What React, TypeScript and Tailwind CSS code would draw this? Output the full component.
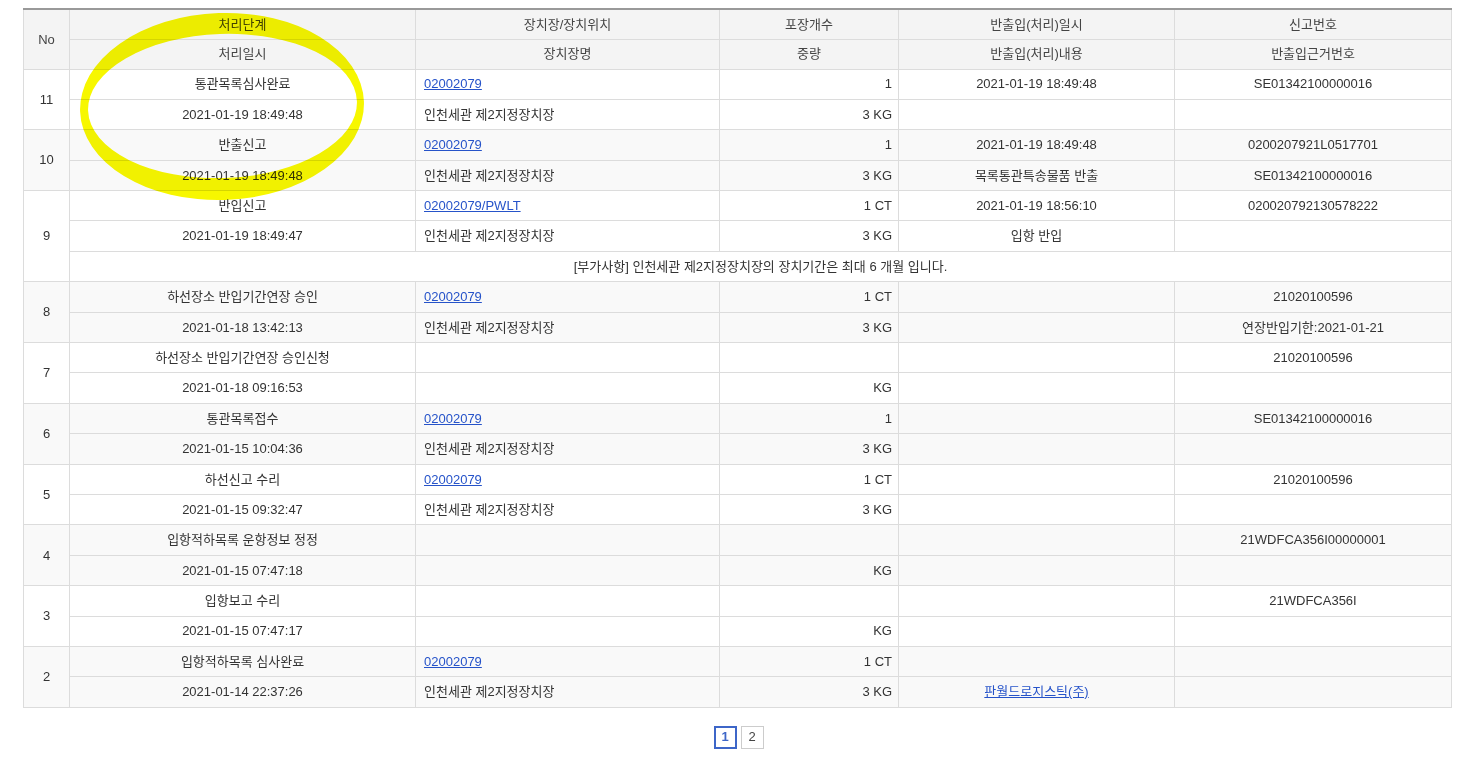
import React from 'react'

type Row = {
  no: number
  step: string
  date: string
  loc?: string
  locName?: string
  pkg?: string
  weight?: string
  ioDate?: string
  ioDesc?: string
  ioLink?: boolean
  reportNo?: string
  basisNo?: string
  note?: string
}

const rows: Row[] = [
  { no: 11, step: '통관목록심사완료', date: '2021-01-19 18:49:48', loc: '02002079', locName: '인천세관 제2지정장치장', pkg: '1', weight: '3 KG', ioDate: '2021-01-19 18:49:48', reportNo: 'SE01342100000016' },
  { no: 10, step: '반출신고', date: '2021-01-19 18:49:48', loc: '02002079', locName: '인천세관 제2지정장치장', pkg: '1', weight: '3 KG', ioDate: '2021-01-19 18:49:48', ioDesc: '목록통관특송물품 반출', reportNo: '0200207921L0517701', basisNo: 'SE01342100000016' },
  { no: 9, step: '반입신고', date: '2021-01-19 18:49:47', loc: '02002079/PWLT', locName: '인천세관 제2지정장치장', pkg: '1 CT', weight: '3 KG', ioDate: '2021-01-19 18:56:10', ioDesc: '입항 반입', reportNo: '020020792130578222', note: '[부가사항] 인천세관 제2지정장치장의 장치기간은 최대 6 개월 입니다.' },
  { no: 8, step: '하선장소 반입기간연장 승인', date: '2021-01-18 13:42:13', loc: '02002079', locName: '인천세관 제2지정장치장', pkg: '1 CT', weight: '3 KG', reportNo: '21020100596', basisNo: '연장반입기한:2021-01-21' },
  { no: 7, step: '하선장소 반입기간연장 승인신청', date: '2021-01-18 09:16:53', weight: 'KG', reportNo: '21020100596' },
  { no: 6, step: '통관목록접수', date: '2021-01-15 10:04:36', loc: '02002079', locName: '인천세관 제2지정장치장', pkg: '1', weight: '3 KG', reportNo: 'SE01342100000016' },
  { no: 5, step: '하선신고 수리', date: '2021-01-15 09:32:47', loc: '02002079', locName: '인천세관 제2지정장치장', pkg: '1 CT', weight: '3 KG', reportNo: '21020100596' },
  { no: 4, step: '입항적하목록 운항정보 정정', date: '2021-01-15 07:47:18', weight: 'KG', reportNo: '21WDFCA356I00000001' },
  { no: 3, step: '입항보고 수리', date: '2021-01-15 07:47:17', weight: 'KG', reportNo: '21WDFCA356I' },
  { no: 2, step: '입항적하목록 심사완료', date: '2021-01-14 22:37:26', loc: '02002079', locName: '인천세관 제2지정장치장', pkg: '1 CT', weight: '3 KG', ioDesc: '판월드로지스틱(주)', ioLink: true },
]

const td = 'border border-[#dcdcdc] h-[30.4px] p-0 align-middle'
const th = 'border border-[#dcdcdc] h-[30px] p-0 font-normal text-[#444] text-center'

export default function App() {
  return (
    <div className="relative min-h-[766px] bg-white text-[13px] text-[#333] font-['Liberation_Sans','Noto_Sans_CJK_KR',sans-serif]">
      <div className="pl-[23px] pr-[20px] pt-[8px]">
        <table className="w-[1428px] table-fixed border-collapse">
          <colgroup>
            <col className="w-[46px]" />
            <col className="w-[346px]" />
            <col className="w-[304px]" />
            <col className="w-[179px]" />
            <col className="w-[276px]" />
            <col className="w-[277px]" />
          </colgroup>
          <thead className="bg-[#f4f4f4]">
            <tr>
              <th rowSpan={2} className={`${th} border-t-2 border-t-[#999]`}>No</th>
              <th className={`${th} border-t-2 border-t-[#999]`}>처리단계</th>
              <th className={`${th} border-t-2 border-t-[#999]`}>장치장/장치위치</th>
              <th className={`${th} border-t-2 border-t-[#999]`}>포장개수</th>
              <th className={`${th} border-t-2 border-t-[#999]`}>반출입(처리)일시</th>
              <th className={`${th} border-t-2 border-t-[#999]`}>신고번호</th>
            </tr>
            <tr>
              <th className={th}>처리일시</th>
              <th className={th}>장치장명</th>
              <th className={th}>중량</th>
              <th className={th}>반출입(처리)내용</th>
              <th className={th}>반출입근거번호</th>
            </tr>
          </thead>
          {rows.map((r, i) => {
            const bg = i % 2 === 1 ? 'bg-[#f9f9f9]' : 'bg-white'
            return (
              <tbody key={r.no} className={bg}>
                <tr>
                  <td rowSpan={r.note ? 3 : 2} className={`${td} text-center`}>{r.no}</td>
                  <td className={`${td} text-center`}>{r.step}</td>
                  <td className={`${td} pl-[8px]`}>
                    {r.loc && <a href="#" className="text-[#2653c9] underline">{r.loc}</a>}
                  </td>
                  <td className={`${td} text-right pr-[6px]`}>{r.pkg}</td>
                  <td className={`${td} text-center`}>{r.ioDate}</td>
                  <td className={`${td} text-center`}>{r.reportNo}</td>
                </tr>
                <tr>
                  <td className={`${td} text-center`}>{r.date}</td>
                  <td className={`${td} pl-[8px]`}>{r.locName}</td>
                  <td className={`${td} text-right pr-[6px]`}>{r.weight}</td>
                  <td className={`${td} text-center`}>
                    {r.ioLink ? <a href="#" className="text-[#2653c9] underline">{r.ioDesc}</a> : r.ioDesc}
                  </td>
                  <td className={`${td} text-center`}>{r.basisNo}</td>
                </tr>
                {r.note && (
                  <tr>
                    <td colSpan={5} className={`${td} text-center`}>{r.note}</td>
                  </tr>
                )}
              </tbody>
            )
          })}
        </table>

        {/* Pagination */}
        <div className="flex justify-center gap-[4px] mt-[18px] pl-[3px]">
          <a href="#" className="w-[23px] h-[23px] flex items-center justify-center border-2 border-[#3d66c8] text-[#3d66c8] font-bold text-[13px]">1</a>
          <a href="#" className="w-[23px] h-[23px] flex items-center justify-center border border-[#ccc] text-[#444] text-[13px]">2</a>
        </div>
      </div>

      {/* hand-drawn highlight */}
      <svg
        className="absolute left-0 top-0 pointer-events-none mix-blend-multiply"
        width="420"
        height="220"
        viewBox="0 0 420 220"
      >
        <path
          fillRule="evenodd"
          fill="#f7f700"
          d="M80 106.5a142 93.5 0 1 0 284 0a142 93.5 0 1 0 -284 0Z M88 106a134.5 72 0 1 0 269 0a134.5 72 0 1 0 -269 0Z"
          transform="rotate(-2 222 106)"
        />
      </svg>
    </div>
  )
}
